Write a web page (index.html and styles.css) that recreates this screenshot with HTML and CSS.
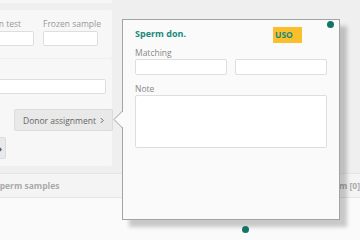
FILE: index.html
```html
<!DOCTYPE html>
<html lang="en">
<head>
    <meta charset="utf-8"/>
    <title>Donor assignment</title>
    <link rel="stylesheet" href="styles.css">
</head>
<body>
<div class="page">
    <div class="side">
        <div class="strip"></div>
        <div class="panel panel-tests">
            <div class="field field-test">
                <label>Sperm test</label>
                <div class="input"></div>
            </div>
            <div class="field field-frozen">
                <label>Frozen sample</label>
                <div class="input"></div>
            </div>
        </div>
        <div class="panel panel-donor">
            <div class="input"></div>
            <div class="actions">
                <button class="btn btn-assign">Donor assignment
                    <svg class="chev" width="5" height="7" viewBox="0 0 5 7"><polyline points="1,0.5 4,3.5 1,6.5" fill="none" stroke="#555" stroke-width="1.1"/></svg>
                </button>
            </div>
            <div class="actions-left">
                <button class="btn btn-more">Add <span class="more-mark">›</span></button>
            </div>
        </div>
    </div>

    <div class="table-head">
        <span class="th th-first">Sperm samples</span>
        <span class="th th-second">Sperm [0]</span>
    </div>
    <div class="table-body"></div>
</div>

<div class="popup">
    <svg class="popup-arrow" width="10" height="18" viewBox="0 0 10 18">
        <polygon points="10,0.5 1,8.5 10,16.5" fill="#fafafa"/>
        <polyline points="9.5,0 1,8.5 9.5,17" fill="none" stroke="#a3a3a3" stroke-width="1"/>
    </svg>
    <div class="pop-head">
        <span class="pop-title">Sperm don.</span>
        <span class="badge">USO</span>
    </div>
    <div class="pop-label">Matching</div>
    <div class="pop-row">
        <div class="pop-input"></div>
        <div class="pop-input"></div>
    </div>
    <div class="pop-label pop-label-note">Note</div>
    <div class="pop-note"></div>
    <span class="handle handle-top"></span>
    <span class="handle handle-bottom"></span>
</div>
</body>
</html>
```

FILE: styles.css
```css
body {
    margin: 0;
    height: 240px;
    overflow: hidden;
    background-color: #efefef;
    font-family: "Open Sans", "Liberation Sans", sans-serif;
    font-size: 8.5px;
    color: #888;
}

.page {
    display: flex;
    flex-direction: column;
    height: 240px;
}

.side {
    width: 172px;
    margin-left: -60px;
}

.strip {
    height: 3px;
    margin-bottom: 7px;
    background-color: #f7f7f7;
    border-radius: 0 0 2px 2px;
}

.panel {
    background-color: #f7f7f7;
    border-radius: 2px;
    box-sizing: border-box;
}

.panel-tests {
    display: flex;
    gap: 9px;
    height: 48px;
    padding: 8px 0 0 38px;
}

.field label {
    display: block;
    line-height: 11px;
    margin-bottom: 2px;
    color: #999;
    white-space: nowrap;
}

.field-test {
    width: 56px;
}

.field-frozen {
    width: 55px;
}

.input {
    height: 15px;
    box-sizing: border-box;
    background-color: #fff;
    border: 1px solid #dedede;
    border-radius: 2px;
}

.panel-donor {
    height: 107px;
    margin-top: 1px;
    padding: 20px 6px 7px 10px;
}

.actions {
    display: flex;
    justify-content: flex-end;
    margin: 15px -7px 0 0;
}

.actions-left {
    display: flex;
    margin-top: 6px;
}

.btn {
    display: flex;
    align-items: center;
    height: 22px;
    box-sizing: border-box;
    padding: 0 8px;
    background-color: #e9e9e9;
    border: 1px solid #dcdcdc;
    border-radius: 2px;
    font-family: inherit;
    font-size: 8.5px;
    color: #666;
    white-space: nowrap;
}

.btn-assign {
    width: 99px;
}

.chev {
    margin-left: 4px;
}

.btn-more {
    width: 56px;
    justify-content: flex-end;
    padding-right: 3px;
}

.more-mark {
    margin-left: 20px;
    color: #444;
    font-size: 9px;
    font-weight: bold;
}

.table-head {
    display: flex;
    height: 25px;
    margin-top: 7px;
    box-sizing: border-box;
    background-color: #f4f4f4;
    border-top: 1px solid #e5e5e5;
    border-bottom: 1px solid #e5e5e5;
}

.th {
    line-height: 23px;
    font-weight: bold;
    color: #aaa;
    white-space: nowrap;
}

.th-first {
    margin-left: -5px;
    width: 328px;
}

.table-body {
    flex: 1;
    background-color: #fafafa;
}

/* popover */
.popup {
    position: absolute;
    left: 122px;
    top: 19px;
    width: 218px;
    height: 201px;
    box-sizing: border-box;
    padding: 7px 12px 0 12px;
    background-color: #fafafa;
    border: 1px solid #a3a3a3;
    box-shadow: 7px 7px 4px rgba(0, 0, 0, 0.2);
}

.popup-arrow {
    position: absolute;
    left: -10px;
    top: 91px;
}

.pop-head {
    display: flex;
    align-items: flex-start;
    height: 16px;
}

.pop-title {
    padding-top: 1px;
    line-height: 12px;
    font-size: 9px;
    font-weight: bold;
    color: #178a7b;
}

.badge {
    margin-left: auto;
    margin-right: 25px;
    width: 29px;
    height: 16px;
    box-sizing: border-box;
    padding-left: 2px;
    line-height: 16px;
    background-color: #fbbf2c;
    font-weight: bold;
    color: #178a7b;
}

.pop-label {
    margin-top: 4px;
    line-height: 12px;
    color: #888;
}

.pop-label-note {
    margin-top: 8px;
}

.pop-row {
    display: grid;
    grid-template-columns: 1fr 1fr;
    gap: 8px;
}

.pop-input,
.pop-note {
    box-sizing: border-box;
    background-color: #fff;
    border: 1px solid #dedede;
    border-radius: 2px;
}

.pop-input {
    height: 16px;
}

.pop-note {
    height: 53px;
}

.handle {
    position: absolute;
    width: 7px;
    height: 7px;
    border-radius: 50%;
    background-color: #137568;
}

.handle-top {
    left: 204px;
    top: 1px;
}

.handle-bottom {
    left: 119px;
    top: 206px;
}
```
